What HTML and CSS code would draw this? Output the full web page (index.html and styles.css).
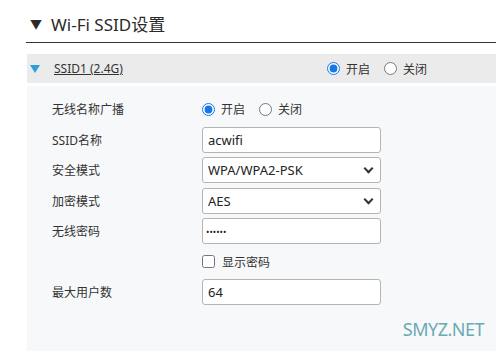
FILE: index.html
```html
<!DOCTYPE html>
<html lang="zh-CN">
<head>
  <meta charset="UTF-8" />
  <title>Wi-Fi SSID设置</title>
  <link rel="stylesheet" href="styles.css">
</head>
<body>
  <div class="page">
    <h2 class="title"><span class="caret">▼</span>Wi-Fi SSID设置</h2>

    <div class="ssid-bar">
      <span class="blue-caret"></span>
      <a class="ssid-name">SSID1 (2.4G)</a>
      <div class="radios bar-radios">
        <label><input type="radio" name="ssid1" checked> 开启</label>
        <label><input type="radio" name="ssid1"> 关闭</label>
      </div>
    </div>

    <div class="panel">
      <div class="row">
        <span class="label">无线名称广播</span>
        <div class="radios">
          <label><input type="radio" name="bcast" checked> 开启</label>
          <label><input type="radio" name="bcast"> 关闭</label>
        </div>
      </div>
      <div class="row">
        <span class="label">SSID名称</span>
        <input class="field" type="text" value="acwifi">
      </div>
      <div class="row">
        <span class="label">安全模式</span>
        <span class="select-wrap">
          <select class="field">
            <option>WPA/WPA2-PSK</option>
          </select>
        </span>
      </div>
      <div class="row">
        <span class="label">加密模式</span>
        <span class="select-wrap">
          <select class="field">
            <option>AES</option>
          </select>
        </span>
      </div>
      <div class="row">
        <span class="label">无线密码</span>
        <input class="field" type="password" value="123456">
      </div>
      <div class="row">
        <span class="label"></span>
        <label class="check"><input type="checkbox"> 显示密码</label>
      </div>
      <div class="row">
        <span class="label">最大用户数</span>
        <input class="field" type="text" value="64">
      </div>

      <div class="watermark">SMYZ.NET</div>
    </div>
  </div>
</body>
</html>
```

FILE: styles.css
```css
* {
  box-sizing: border-box;
}

body {
  margin: 0;
  font-family: "Noto Sans", "Noto Sans CJK SC", sans-serif;
  font-size: 12px;
  color: #333;
  background: #fff;
}

.page {
  padding-left: 26px;
  height: 351px;
  display: flex;
  flex-direction: column;
}

.title {
  margin: 0;
  height: 43px;
  padding-top: 13px;
  font-size: 17px;
  font-weight: normal;
  color: #2a2a2a;
  border-bottom: 1px solid #333;
  line-height: 24px;
}

.caret {
  display: inline-block;
  font-size: 12px;
  width: 25px;
  padding-left: 4px;
  vertical-align: 2px;
}

.ssid-bar {
  margin-top: 11px;
  margin-left: 1px;
  height: 29px;
  background: #ebebeb;
  display: flex;
  align-items: center;
}

.blue-caret {
  width: 0;
  height: 0;
  margin-left: 3px;
  margin-right: 14px;
  border-left: 5px solid transparent;
  border-right: 5px solid transparent;
  border-top: 8px solid #2e9fd8;
}

.ssid-name {
  text-decoration: underline;
  color: #333;
  width: 273px;
}

.radios {
  display: flex;
  gap: 14px;
}

.radios label,
.check {
  display: flex;
  align-items: center;
}

input[type="radio"],
input[type="checkbox"] {
  margin: 0 6px 0 0;
  width: 13px;
  height: 13px;
  accent-color: #1677e6;
}

.panel {
  position: relative;
  flex: 1;
  margin-top: 3px;
  margin-left: 1px;
  padding: 8px 0 0 25px;
  background: #f7f8f9;
}

.row {
  display: flex;
  align-items: center;
  height: 30.5px;
}

.label {
  width: 150px;
}

.field {
  width: 179px;
  height: 26px;
  padding: 0 5px;
  border: 1px solid #b4b4b4;
  border-radius: 3px;
  background: #fff;
  font-family: inherit;
  font-size: 13px;
  color: #222;
  outline: none;
}

input[type="password"].field {
  font-size: 9px;
  padding-left: 3px;
}

.select-wrap {
  position: relative;
  display: inline-block;
}

.select-wrap select {
  appearance: none;
  -webkit-appearance: none;
}

.select-wrap::after {
  content: "";
  position: absolute;
  right: 9px;
  top: 8px;
  width: 5px;
  height: 5px;
  border-right: 2px solid #333;
  border-bottom: 2px solid #333;
  transform: rotate(45deg);
  pointer-events: none;
}

.check input {
  margin-right: 7px;
}

.watermark {
  position: absolute;
  right: 12px;
  bottom: 10px;
  font-size: 18px;
  color: #6aaab5;
  letter-spacing: -0.5px;
}
```
